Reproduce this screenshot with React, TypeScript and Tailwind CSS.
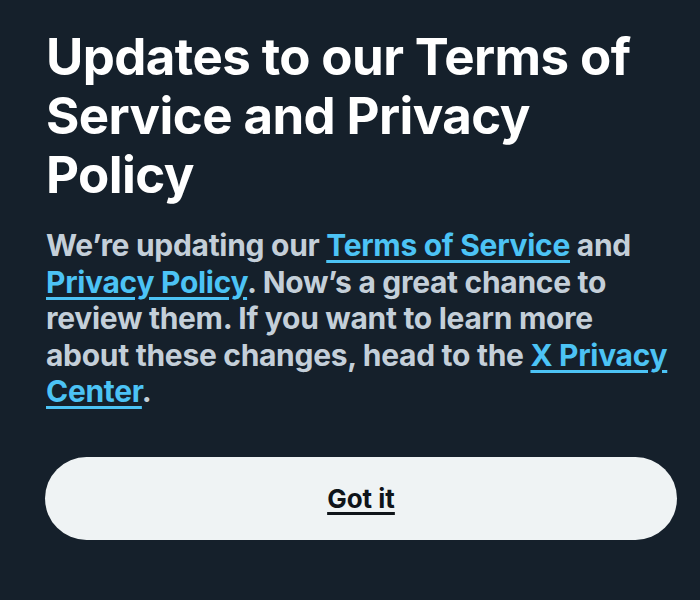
const link = "text-[#4cc3f5] underline decoration-[3px] underline-offset-[4px]";

export default function App() {
  return (
    <div className="w-[700px] h-[600px] bg-[#15202b] overflow-hidden" style={{ fontFamily: "Inter, 'Liberation Sans', sans-serif" }}>
      <div className="pl-[46px] pr-[10px] pt-[27px]">
        <h1 className="text-[51px] leading-[59px] font-bold text-white tracking-[-0.6px]">
          <span className="block whitespace-nowrap">Updates to our Terms of</span>
          <span className="block whitespace-nowrap">Service and Privacy</span>
          <span className="block whitespace-nowrap">Policy</span>
        </h1>
        <p className="mt-[23px] text-[30px] leading-[36.5px] font-bold text-[#c4cfd9] tracking-[-0.3px]">
          <span className="block whitespace-nowrap">
            We’re updating our <a className={link}>Terms of Service</a> and
          </span>
          <span className="block whitespace-nowrap">
            <a className={link}>Privacy Policy</a>. Now’s a great chance to
          </span>
          <span className="block whitespace-nowrap">review them. If you want to learn more</span>
          <span className="block whitespace-nowrap">
            about these changes, head to the <a className={link}>X Privacy</a>
          </span>
          <span className="block whitespace-nowrap">
            <a className={link}>Center</a>.
          </span>
        </p>
      </div>
      <div className="pl-[45px] pr-[23px] mt-[47px]">
        <button className="w-full h-[83px] rounded-full bg-[#eff3f4] flex items-center justify-center">
          <span className="text-[26px] font-bold text-[#0f1419] underline decoration-[3px] underline-offset-[4px]">Got it</span>
        </button>
      </div>
    </div>
  );
}
